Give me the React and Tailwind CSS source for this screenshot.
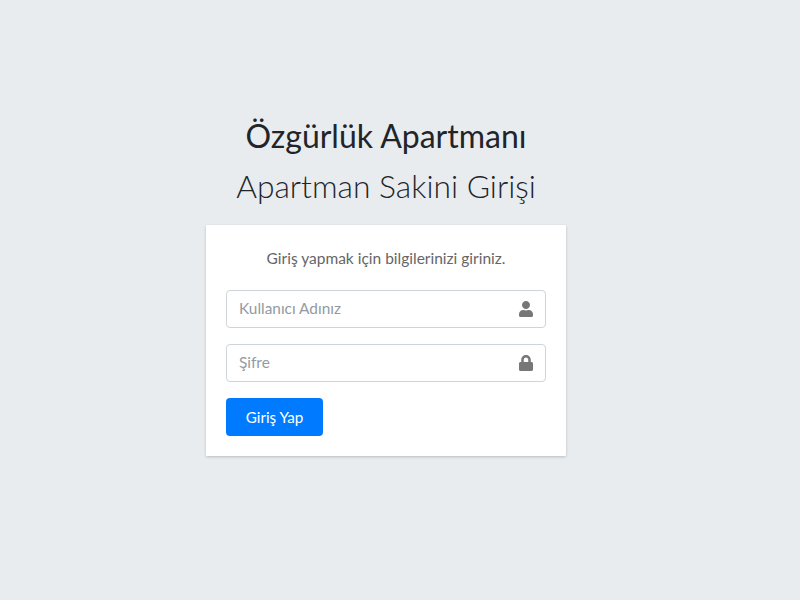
import React from 'react';
import { FaUser, FaLock } from 'react-icons/fa';

function Field({ placeholder, type, icon }) {
    return (
        <div className="flex h-[38px] items-center rounded-[4px] border border-[#ced4da] bg-white pl-3 pr-[11px] mb-4">
            <input
                type={type}
                placeholder={placeholder}
                className="min-w-0 flex-1 bg-transparent text-[15.4px] text-[#495057] outline-none placeholder:text-[#939ba2] font-['Lato',sans-serif]"
            />
            <span className="text-[#777777] text-[16px]">{icon}</span>
        </div>
    );
}

export default function App() {
    return (
        <div className="flex min-h-[600px] flex-col items-center justify-center bg-[#e9ecef] pr-7 pb-[34px] font-['Lato',sans-serif]">
            <div className="w-[360px]">
                <div className="mb-[13px] text-center text-[#212529]">
                    <div className="text-[32px] leading-[51px] font-normal">Özgürlük Apartmanı</div>
                    <div className="text-[31.8px] leading-[51px] font-light">Apartman Sakini Girişi</div>
                </div>
                <div className="rounded-[1px] bg-white p-5 shadow-[0_1px_3px_rgba(0,0,0,0.2)]">
                    <p className="mb-5 pt-px text-center text-[15.5px] leading-[24px] text-[#666666]">Giriş yapmak için bilgilerinizi giriniz.</p>
                    <Field placeholder="Kullanıcı Adınız" type="text" icon={<FaUser />} />
                    <Field placeholder="Şifre" type="password" icon={<FaLock />} />
                    <button className="h-[38px] w-[97px] rounded-[4px] bg-[#007bff] text-[15.2px] text-white">Giriş Yap</button>
                </div>
            </div>
        </div>
    );
}
